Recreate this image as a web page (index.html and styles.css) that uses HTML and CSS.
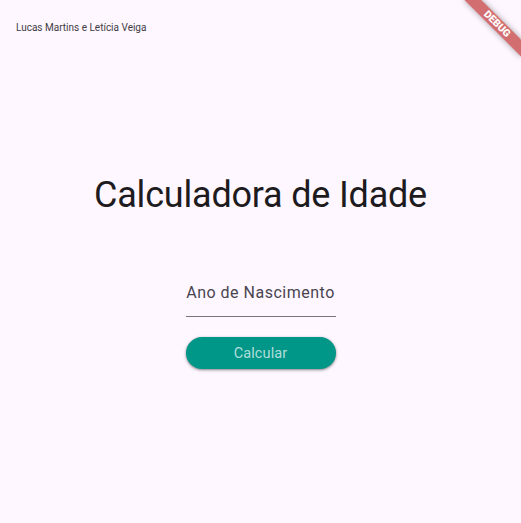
FILE: index.html
```html
<!DOCTYPE html>
<html lang="pt">
<head>
<meta charset="utf-8">
<title>Calculadora de Idade</title>
<link rel="stylesheet" href="styles.css">
</head>
<body>
<header class="appbar"><span class="appbar-title">Lucas Martins e Letícia Veiga</span></header>
<main class="content">
  <h1 class="title">Calculadora de Idade</h1>
  <div class="field"><span class="field-label">Ano de Nascimento</span></div>
  <button class="btn" type="button">Calcular</button>
</main>
<div class="banner">DEBUG</div>
</body>
</html>
```
FILE: styles.css
```css
html, body {
  margin: 0;
  padding: 0;
  background: #fef7ff;
  font-family: Roboto, "Liberation Sans", sans-serif;
  overflow: hidden;
}
body {
  width: 521px;
  height: 523px;
  position: relative;
}
.appbar {
  height: 56px;
  display: flex;
  align-items: center;
  padding-left: 16px;
}
.appbar-title {
  font-size: 10px;
  color: #3f3b44;
  line-height: 14px;
}
.content {
  display: flex;
  flex-direction: column;
  align-items: center;
}
.title {
  margin: 117px 0 0;
  font-size: 36px;
  line-height: 44px;
  font-weight: 400;
  letter-spacing: -0.2px;
  color: #1d1b20;
}
.field {
  margin-top: 64px;
  width: 150px;
  border-bottom: 1px solid #79747e;
  padding-bottom: 11px;
  display: flex;
  justify-content: center;
}
.field-label {
  font-size: 16px;
  line-height: 24px;
  letter-spacing: 0.5px;
  color: #49454f;
}
.btn {
  margin-top: 20px;
  width: 150px;
  height: 32px;
  border: none;
  border-radius: 16px;
  background: #009688;
  color: rgba(255, 255, 255, 0.7);
  font-family: Roboto, "Liberation Sans", sans-serif;
  font-size: 14.5px;
  letter-spacing: 0.1px;
  box-shadow: 0 1px 2px rgba(0, 0, 0, 0.3), 0 1px 3px 1px rgba(0, 0, 0, 0.15);
  padding: 0;
}
.banner {
  position: absolute;
  left: 481px;
  top: 28px;
  width: 80px;
  height: 12px;
  transform-origin: 40px -28px;
  transform: rotate(45deg);
  background: rgba(183, 28, 28, 0.63);
  box-shadow: 0 0 6px rgba(0, 0, 0, 0.35);
  color: #fff;
  font-family: Roboto, "Liberation Sans", sans-serif;
  font-size: 10.2px;
  font-weight: 900;
  line-height: 12px;
  text-align: center;
}
```
